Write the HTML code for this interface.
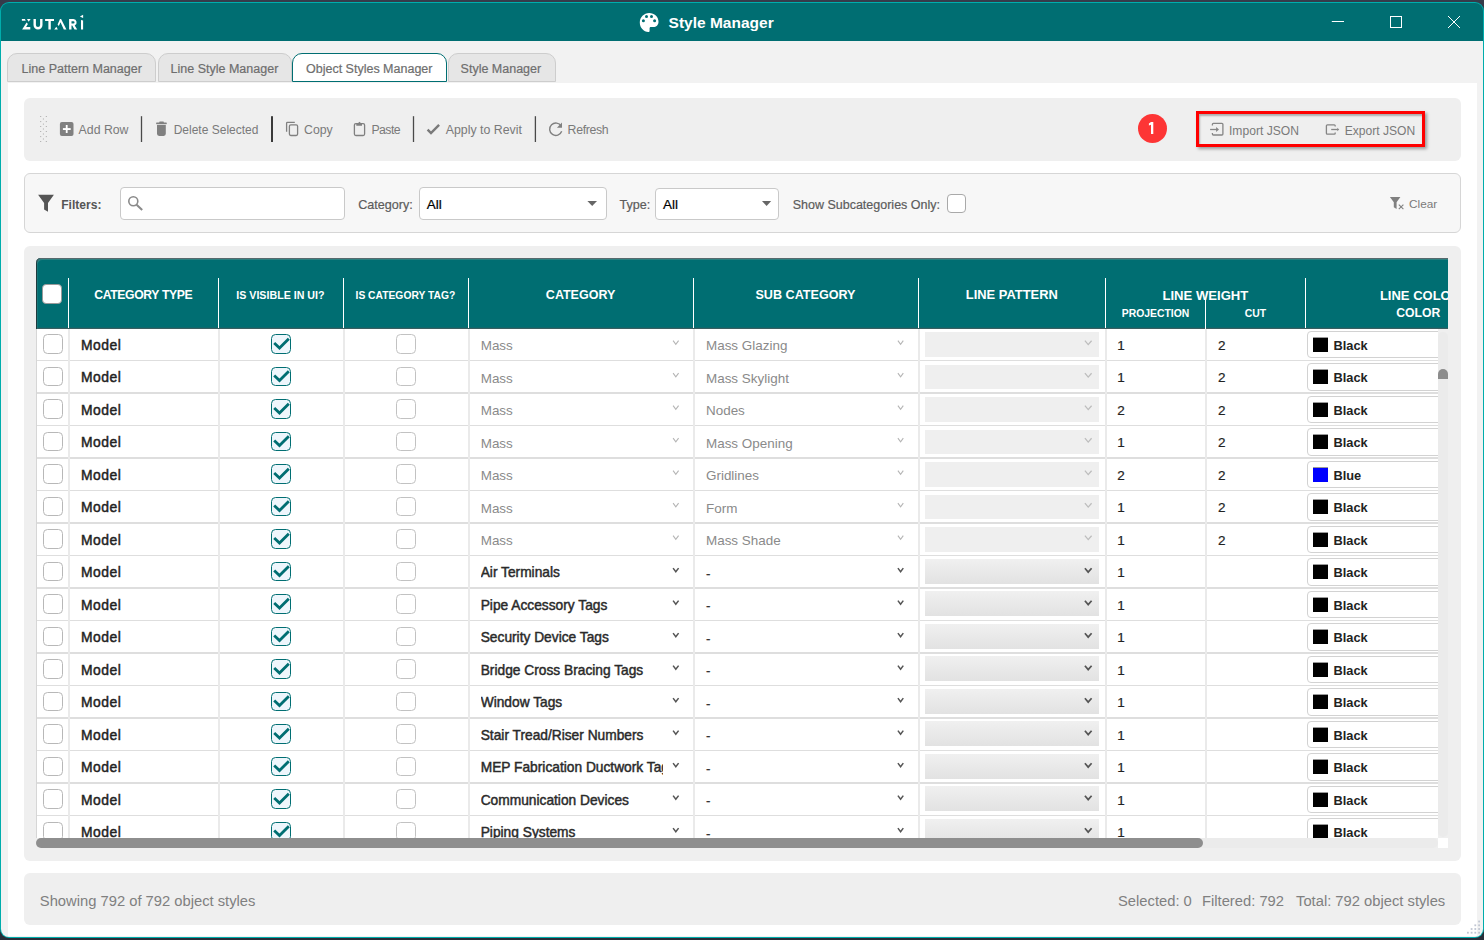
<!DOCTYPE html><html><head><meta charset="utf-8"><style>
html,body{margin:0;padding:0;}
body{width:1484px;height:940px;position:relative;overflow:hidden;background:#363b4a;font-family:"Liberation Sans",sans-serif;}
.t{position:absolute;line-height:1;white-space:nowrap;}
svg{position:absolute;overflow:visible;}
</style></head><body>
<div style="position:absolute;left:0.00px;top:900.00px;width:1484.00px;height:40.00px;background:#292d38;"></div>
<div style="position:absolute;left:0.00px;top:2.00px;width:1484.00px;height:936.30px;background:#00adac;border-radius:9px;"></div>
<div style="position:absolute;left:1.10px;top:40.60px;width:1481.60px;height:896.40px;background:#f2f2f2;border-radius:0 0 8px 8px;"></div>
<div style="position:absolute;left:1.10px;top:3.10px;width:1481.60px;height:37.50px;background:#006e72;border-radius:8px 8px 0 0;"></div>
<div style="position:absolute;left:7.50px;top:82.50px;width:1469.00px;height:853.50px;background:#fff;"></div>
<svg style="left:0px;top:0px" width="1484" height="41" viewBox="0 0 1484 41"><g fill="#fff"><polygon points="21.9,18.9 24.9,18.9 25.7,20.8 21.9,20.8"/><polygon points="27,18.9 30.7,18.9 28.6,21.8"/><polygon points="22.1,29.6 26.6,22.4 27.9,24.1 26.1,27.1 30.3,27.1 30.3,29.6"/><path d="M33.5,18.9 h2.4 v6 a2.1,2.1 0 0 0 4.2,0 v-6 h2.4 v6 a4.5,4.6 0 0 1 -9,0 z"/><polygon points="45.1,18.9 54,18.9 54,20.9 50.8,20.9 50.8,29.6 48.4,29.6 48.4,20.9 45.1,20.9"/><polygon points="54.2,29.6 57.8,29.6 56.4,26.7"/><polygon points="57.6,24.5 60,18.9 61.1,18.9 66.4,29.6 63.8,29.6 60.5,22.3 58.8,26"/><path d="M69.1,19.1 h4.3 a3.3,3.3 0 0 1 1.3,6.3 l2.5,4.2 h-2.7 l-2.3,-4 h-0.7 v4 h-2.4 z M71.5,21.3 v2.3 h1.9 a1.15,1.15 0 0 0 0,-2.3 z" fill-rule="evenodd"/><polygon points="81,20 83.1,20.6 83.1,29.6 81,29.6"/><polygon points="79.9,16.6 83.1,14.7 83.1,17.9"/></g><path fill="#fff" d="M649.2,12.9 C654.4,12.9 658.5,16.7 658.5,21.7 C658.5,24.9 656.3,27.1 653.3,27.1 L650.8,27.1 C650,27.1 649.6,27.7 649.6,28.5 L649.6,30.4 C649.6,31.5 649.2,32 648.4,32 C643.6,31.8 639.8,27.7 639.8,22.5 C639.8,17.2 644,12.9 649.2,12.9 Z"/><g fill="#006e72"><circle cx="646.5" cy="16.6" r="1.5"/><circle cx="651.5" cy="16.6" r="1.5"/><circle cx="643.4" cy="20.8" r="1.5"/><circle cx="654.6" cy="20.8" r="1.5"/></g><g stroke="#fff" stroke-width="1" fill="none"><line x1="1331.8" y1="21.5" x2="1344" y2="21.5"/><rect x="1390.5" y="16.5" width="11" height="11"/><line x1="1448" y1="16" x2="1460" y2="28"/><line x1="1460" y1="16" x2="1448" y2="28"/></g></svg>
<div class="t" style="left:668.60px;top:14.88px;font-size:15.5px;font-weight:700;color:#fff;">Style Manager</div>
<div style="position:absolute;left:7.10px;top:53.30px;width:149.40px;height:28.80px;background:#e6e6e6;border:1px solid #cdcdcd;border-radius:10px 10px 0 0;box-sizing:border-box;"></div>
<div class="t" style="left:21.60px;top:63.02px;font-size:12.5px;font-weight:400;color:#6e6e6e;-webkit-text-stroke:0.2px currentColor;">Line Pattern Manager</div>
<div style="position:absolute;left:157.50px;top:53.30px;width:134.00px;height:28.80px;background:#e6e6e6;border:1px solid #cdcdcd;border-radius:10px 10px 0 0;box-sizing:border-box;"></div>
<div class="t" style="left:170.60px;top:63.02px;font-size:12.5px;font-weight:400;color:#6e6e6e;-webkit-text-stroke:0.2px currentColor;">Line Style Manager</div>
<div style="position:absolute;left:292.00px;top:53.30px;width:155.00px;height:28.60px;background:#fff;border:1.5px solid #006e72;border-radius:10px 10px 0 0;box-sizing:border-box;"></div>
<div class="t" style="left:306.00px;top:63.02px;font-size:12.5px;font-weight:400;color:#6e6e6e;-webkit-text-stroke:0.2px currentColor;">Object Styles Manager</div>
<div style="position:absolute;left:447.50px;top:53.30px;width:108.50px;height:28.80px;background:#e6e6e6;border:1px solid #cdcdcd;border-radius:10px 10px 0 0;box-sizing:border-box;"></div>
<div class="t" style="left:460.60px;top:63.02px;font-size:12.5px;font-weight:400;color:#6e6e6e;-webkit-text-stroke:0.2px currentColor;">Style Manager</div>
<div style="position:absolute;left:24.00px;top:98.00px;width:1437.00px;height:62.50px;background:#efefef;border-radius:6px;"></div>
<svg style="left:0px;top:90px" width="700" height="70" viewBox="0 90 700 70"><g fill="#a8a8a8"><rect x="40.2" y="116.0" width="1" height="1"/><rect x="45.8" y="116.0" width="1" height="1"/><rect x="40.2" y="121.1" width="1" height="1"/><rect x="45.8" y="121.1" width="1" height="1"/><rect x="40.2" y="126.0" width="1" height="1"/><rect x="45.8" y="126.0" width="1" height="1"/><rect x="40.2" y="131.0" width="1" height="1"/><rect x="45.8" y="131.0" width="1" height="1"/><rect x="40.2" y="136.1" width="1" height="1"/><rect x="45.8" y="136.1" width="1" height="1"/><rect x="40.2" y="141.0" width="1" height="1"/><rect x="45.8" y="141.0" width="1" height="1"/><rect x="42.9" y="118.5" width="1" height="1"/><rect x="42.9" y="123.6" width="1" height="1"/><rect x="42.9" y="128.5" width="1" height="1"/><rect x="42.9" y="133.5" width="1" height="1"/><rect x="42.9" y="138.5" width="1" height="1"/></g><rect x="59.9" y="122" width="13.6" height="13.9" rx="2" fill="#808080"/><rect x="62.9" y="128.1" width="7.8" height="1.9" fill="#fff"/><rect x="65.8" y="125" width="1.8" height="8" fill="#fff"/><rect x="140.85" y="116.2" width="1.3" height="25.8" fill="#4a4a4a"/><rect x="271.0" y="116.2" width="2" height="25.8" fill="#3a3a3a"/><rect x="412.85" y="116.2" width="1.3" height="25.8" fill="#4a4a4a"/><rect x="534.75" y="116.2" width="1.3" height="25.8" fill="#4a4a4a"/><g fill="#808080"><rect x="156.1" y="122.4" width="10.7" height="1.8" rx="0.6"/><rect x="159.2" y="121.6" width="4.7" height="1.5" rx="0.7"/><path d="M157,125 h8.8 v8.8 a2.1,2.1 0 0 1 -2.1,2.1 h-4.6 a2.1,2.1 0 0 1 -2.1,-2.1 z"/></g><g fill="none" stroke="#808080" stroke-width="1.3"><path d="M286.6,131.7 V123.2 a0.8,0.8 0 0 1 0.8,-0.8 H294.8"/><rect x="289.4" y="124.9" width="8.2" height="10.6" rx="1.4"/></g><g fill="none" stroke="#808080" stroke-width="1.3"><rect x="354.4" y="123.6" width="10.2" height="11.9" rx="1.5"/></g><path d="M356.3,123 h1.8 l1.4,-1.3 l1.4,1.3 h1.1 v2.8 h-5.7 z" fill="#808080"/><polyline points="427.6,129.6 431,133.1 439.1,124.8" fill="none" stroke="#7a7a7a" stroke-width="2.4"/><path d="M561.2,126.1 A6.2,6.2 0 1 0 561.7,131.3" fill="none" stroke="#808080" stroke-width="1.4"/><polygon points="556.9,127.7 562,127.7 562,122.5" fill="#808080"/></svg>
<div class="t" style="left:78.60px;top:123.59px;font-size:12.3px;font-weight:400;color:#7a7a7a;">Add Row</div>
<div class="t" style="left:173.70px;top:123.84px;font-size:12.0px;font-weight:400;color:#7a7a7a;">Delete Selected</div>
<div class="t" style="left:304.00px;top:123.59px;font-size:12.3px;font-weight:400;color:#7a7a7a;">Copy</div>
<div class="t" style="left:371.40px;top:123.59px;font-size:12.3px;font-weight:400;color:#7a7a7a;letter-spacing:-0.55px;">Paste</div>
<div class="t" style="left:445.70px;top:123.55px;font-size:12.35px;font-weight:400;color:#7a7a7a;">Apply to Revit</div>
<div class="t" style="left:567.60px;top:123.59px;font-size:12.3px;font-weight:400;color:#7a7a7a;letter-spacing:-0.33px;">Refresh</div>
<div style="position:absolute;left:1138.00px;top:113.80px;width:29.30px;height:29.30px;background:#fd3535;border-radius:50%;"></div>
<svg style="left:1140px;top:115px" width="25" height="25" viewBox="1140 115 25 25"><polygon points="1151,122 1153.3,122 1153.3,134 1151,134 1151,124.7 1148.9,125.5 1148.9,123.6" fill="#fff"/></svg>
<div style="position:absolute;left:1195.80px;top:110.90px;width:229.20px;height:36.10px;border:3px solid #ff0000;box-sizing:border-box;box-shadow:2px 2px 3px rgba(0,0,0,0.35), inset 1px 2px 2px rgba(0,0,0,0.28);"></div>
<svg style="left:1200px;top:115px" width="150" height="30" viewBox="1200 115 150 30"><g fill="none" stroke="#858585" stroke-width="1.3"><path d="M1212.4,125.6 V124.3 a1,1 0 0 1 1,-1 H1221.9 a1,1 0 0 1 1,1 V134 a1,1 0 0 1 -1,1 H1213.4 a1,1 0 0 1 -1,-1 V132.9"/><line x1="1210.1" y1="129.5" x2="1217" y2="129.5"/><path d="M1335.2,126.6 V125.8 a1,1 0 0 0 -1,-1 H1327.4 a1,1 0 0 0 -1,1 V133.2 a1,1 0 0 0 1,1 H1334.2 a1,1 0 0 0 1,-1 V132.5"/><line x1="1331.2" y1="129.5" x2="1337.8" y2="129.5"/></g><g fill="#858585"><polygon points="1216.1,126.9 1216.1,132.1 1219,129.5"/><polygon points="1337.3,127.7 1337.3,131.3 1339.2,129.5"/></g></svg>
<div class="t" style="left:1229.00px;top:124.56px;font-size:12.1px;font-weight:400;color:#7a7a7a;">Import JSON</div>
<div class="t" style="left:1344.70px;top:124.56px;font-size:12.1px;font-weight:400;color:#7a7a7a;">Export JSON</div>
<div style="position:absolute;left:24.00px;top:173.00px;width:1436.60px;height:59.50px;background:#f7f7f7;border:1px solid #d6d6d6;border-radius:6px;box-sizing:border-box;"></div>
<div style="position:absolute;left:120.00px;top:187.20px;width:225.00px;height:33.00px;background:#fff;border:1px solid #c9c9c9;border-radius:4px;box-sizing:border-box;"></div>
<div style="position:absolute;left:419.00px;top:187.30px;width:187.50px;height:33.00px;background:#fff;border:1px solid #c9c9c9;border-radius:4px;box-sizing:border-box;"></div>
<div style="position:absolute;left:655.40px;top:187.50px;width:124.10px;height:32.80px;background:#fff;border:1px solid #c9c9c9;border-radius:4px;box-sizing:border-box;"></div>
<div style="position:absolute;left:946.60px;top:193.70px;width:19.20px;height:19.20px;background:#fff;border:1px solid #a9a9a9;border-radius:4px;box-sizing:border-box;"></div>
<svg style="left:0px;top:180px" width="1484" height="45" viewBox="0 180 1484 45"><polygon points="38.1,194.8 53.9,194.8 48,203 48,211.8 44.1,209.4 44.1,203" fill="#555"/><circle cx="133.3" cy="201.3" r="4.5" fill="none" stroke="#8a8a8a" stroke-width="1.6"/><line x1="136.6" y1="204.7" x2="142.2" y2="210" stroke="#8a8a8a" stroke-width="2"/><polygon points="587.4,201 597,201 592.2,206" fill="#666"/><polygon points="762,201 771.2,201 766.6,206" fill="#666"/><polygon points="1389.9,196.9 1400.4,196.9 1396.6,202.3 1396.6,209 1393.8,207.3 1393.8,202.3" fill="#808080"/><g stroke="#808080" stroke-width="1.1"><line x1="1398.8" y1="204.6" x2="1403.4" y2="209.1"/><line x1="1403.4" y1="204.6" x2="1398.8" y2="209.1"/></g></svg>
<div class="t" style="left:61.20px;top:199.36px;font-size:12.1px;font-weight:700;color:#555;">Filters:</div>
<div class="t" style="left:358.20px;top:199.23px;font-size:12.6px;font-weight:400;color:#5c5c5c;-webkit-text-stroke:0.2px currentColor;">Category:</div>
<div class="t" style="left:426.80px;top:198.07px;font-size:13.5px;font-weight:400;color:#000;-webkit-text-stroke:0.2px currentColor;">All</div>
<div class="t" style="left:619.50px;top:199.23px;font-size:12.6px;font-weight:400;color:#5c5c5c;-webkit-text-stroke:0.2px currentColor;">Type:</div>
<div class="t" style="left:662.90px;top:198.07px;font-size:13.5px;font-weight:400;color:#000;-webkit-text-stroke:0.2px currentColor;">All</div>
<div class="t" style="left:792.70px;top:199.32px;font-size:12.5px;font-weight:400;color:#5c5c5c;-webkit-text-stroke:0.2px currentColor;">Show Subcategories Only:</div>
<div class="t" style="left:1409.00px;top:199.01px;font-size:11.8px;font-weight:400;color:#7a7a7a;">Clear</div>
<div style="position:absolute;left:24.00px;top:873.00px;width:1436.70px;height:52.00px;background:#efefef;border-radius:6px;"></div>
<div class="t" style="left:39.80px;top:893.81px;font-size:14.75px;font-weight:400;color:#808080;">Showing 792 of 792 object styles</div>
<div class="t" style="left:1118.00px;top:893.81px;font-size:14.75px;font-weight:400;color:#808080;">Selected: 0</div>
<div class="t" style="left:1202.00px;top:893.81px;font-size:14.75px;font-weight:400;color:#808080;">Filtered: 792</div>
<div class="t" style="left:1296.00px;top:893.81px;font-size:14.75px;font-weight:400;color:#808080;">Total: 792 object styles</div>
<div style="position:absolute;left:24.00px;top:246.40px;width:1436.60px;height:614.60px;background:#efefef;border-radius:6px;"></div>
<div style="position:absolute;left:36.30px;top:329.40px;width:1401.80px;height:508.60px;background:#fff;"></div>
<div style="position:absolute;left:36.30px;top:329.40px;width:0.90px;height:508.60px;background:#d6d6d6;"></div>
<div style="position:absolute;left:36.00px;top:258.30px;width:1412.00px;height:71.10px;background:#006e72;border-radius:5px 0 0 0;box-shadow:inset 0 1px 0 #56696d, inset 1px 0 0 #1e3a3e, inset 1.5px 2px 0 #2b8080, inset 0 -1.2px 0 #3a5e61;"></div>
<div style="position:absolute;left:67.90px;top:277.90px;width:1.00px;height:50.60px;background:#fff;"></div>
<div style="position:absolute;left:217.80px;top:277.90px;width:1.00px;height:50.60px;background:#fff;"></div>
<div style="position:absolute;left:342.90px;top:277.90px;width:1.00px;height:50.60px;background:#fff;"></div>
<div style="position:absolute;left:467.80px;top:277.90px;width:1.00px;height:50.60px;background:#fff;"></div>
<div style="position:absolute;left:692.70px;top:277.90px;width:1.00px;height:50.60px;background:#fff;"></div>
<div style="position:absolute;left:917.80px;top:277.90px;width:1.00px;height:50.60px;background:#fff;"></div>
<div style="position:absolute;left:1104.70px;top:277.90px;width:1.00px;height:50.60px;background:#fff;"></div>
<div style="position:absolute;left:1304.90px;top:277.90px;width:1.00px;height:50.60px;background:#fff;"></div>
<div style="position:absolute;left:1205.00px;top:299.50px;width:1.00px;height:29.00px;background:#fff;"></div>
<div style="position:absolute;left:42.00px;top:284.00px;width:19.70px;height:19.80px;background:#fff;border:1px solid #9a9a9a;border-radius:4px;box-sizing:border-box;"></div>
<div class="t" style="left:-6.70px;width:300px;text-align:center;top:288.87px;font-size:12.2px;font-weight:700;color:#fff;letter-spacing:-0.35px">CATEGORY TYPE</div>
<div class="t" style="left:130.40px;width:300px;text-align:center;top:290.18px;font-size:10.66px;font-weight:700;color:#fff;letter-spacing:0px">IS VISIBLE IN UI?</div>
<div class="t" style="left:255.40px;width:300px;text-align:center;top:291.28px;font-size:10.3px;font-weight:700;color:#fff;letter-spacing:0px">IS CATEGORY TAG?</div>
<div class="t" style="left:430.60px;width:300px;text-align:center;top:289.12px;font-size:12.5px;font-weight:700;color:#fff;letter-spacing:0px">CATEGORY</div>
<div class="t" style="left:655.50px;width:300px;text-align:center;top:289.03px;font-size:12.6px;font-weight:700;color:#fff;letter-spacing:0px">SUB CATEGORY</div>
<div class="t" style="left:861.80px;width:300px;text-align:center;top:288.78px;font-size:12.9px;font-weight:700;color:#fff;letter-spacing:0px">LINE PATTERN</div>
<div class="t" style="left:1055.40px;width:300px;text-align:center;top:288.91px;font-size:13.1px;font-weight:700;color:#fff;letter-spacing:0px">LINE WEIGHT</div>
<div class="t" style="left:1005.50px;width:300px;text-align:center;top:309.30px;font-size:10.4px;font-weight:700;color:#fff;letter-spacing:0px">PROJECTION</div>
<div class="t" style="left:1105.40px;width:300px;text-align:center;top:309.30px;font-size:10.4px;font-weight:700;color:#fff;letter-spacing:0px">CUT</div>
<div style="position:absolute;left:1306px;top:258.3px;width:142px;height:71px;overflow:hidden">
<div class="t" style="left:-36px;width:300px;text-align:center;top:30.50px;font-size:13px;font-weight:700;color:#fff">LINE COLOR</div>
<div class="t" style="left:-37.700000000000045px;width:300px;text-align:center;top:49.17px;font-size:12.2px;font-weight:700;color:#fff">COLOR</div>
</div>
<div style="position:absolute;left:37.2px;top:329.4px;width:1400.8px;height:508.6px;overflow:hidden">
<div style="position:absolute;left:0.00px;top:30.35px;width:1401.00px;height:1.50px;background:#dedede;"></div>
<div style="position:absolute;left:0.00px;top:62.85px;width:1401.00px;height:1.50px;background:#dedede;"></div>
<div style="position:absolute;left:0.00px;top:95.35px;width:1401.00px;height:1.50px;background:#dedede;"></div>
<div style="position:absolute;left:0.00px;top:127.85px;width:1401.00px;height:1.50px;background:#dedede;"></div>
<div style="position:absolute;left:0.00px;top:160.35px;width:1401.00px;height:1.50px;background:#dedede;"></div>
<div style="position:absolute;left:0.00px;top:192.85px;width:1401.00px;height:1.50px;background:#dedede;"></div>
<div style="position:absolute;left:0.00px;top:225.35px;width:1401.00px;height:1.50px;background:#dedede;"></div>
<div style="position:absolute;left:0.00px;top:257.85px;width:1401.00px;height:1.50px;background:#dedede;"></div>
<div style="position:absolute;left:0.00px;top:290.35px;width:1401.00px;height:1.50px;background:#dedede;"></div>
<div style="position:absolute;left:0.00px;top:322.85px;width:1401.00px;height:1.50px;background:#dedede;"></div>
<div style="position:absolute;left:0.00px;top:355.35px;width:1401.00px;height:1.50px;background:#dedede;"></div>
<div style="position:absolute;left:0.00px;top:387.85px;width:1401.00px;height:1.50px;background:#dedede;"></div>
<div style="position:absolute;left:0.00px;top:420.35px;width:1401.00px;height:1.50px;background:#dedede;"></div>
<div style="position:absolute;left:0.00px;top:452.85px;width:1401.00px;height:1.50px;background:#dedede;"></div>
<div style="position:absolute;left:0.00px;top:485.35px;width:1401.00px;height:1.50px;background:#dedede;"></div>
<div style="position:absolute;left:31.05px;top:0.00px;width:1.50px;height:509.00px;background:#eaeaea;"></div>
<div style="position:absolute;left:180.95px;top:0.00px;width:1.50px;height:509.00px;background:#eaeaea;"></div>
<div style="position:absolute;left:306.05px;top:0.00px;width:1.50px;height:509.00px;background:#eaeaea;"></div>
<div style="position:absolute;left:430.95px;top:0.00px;width:1.50px;height:509.00px;background:#eaeaea;"></div>
<div style="position:absolute;left:655.85px;top:0.00px;width:1.50px;height:509.00px;background:#eaeaea;"></div>
<div style="position:absolute;left:880.95px;top:0.00px;width:1.50px;height:509.00px;background:#eaeaea;"></div>
<div style="position:absolute;left:1067.85px;top:0.00px;width:1.50px;height:509.00px;background:#eaeaea;"></div>
<div style="position:absolute;left:1168.15px;top:0.00px;width:1.50px;height:509.00px;background:#eaeaea;"></div>
<div style="position:absolute;left:6.10px;top:5.10px;width:19.50px;height:19.50px;background:#fff;border:1px solid #b8b8b8;border-radius:4.5px;box-sizing:border-box;"></div>
<div class="t" style="left:43.80px;top:9.23px;font-size:13.9px;font-weight:400;color:#222;-webkit-text-stroke:0.45px currentColor;letter-spacing:0.5px;">Model</div>
<div style="position:absolute;left:233.90px;top:4.80px;width:19.80px;height:19.80px;background:#eef6fc;border:1.5px solid #006e72;border-radius:4.5px;box-sizing:border-box;"></div>
<div style="position:absolute;left:359.10px;top:5.00px;width:19.30px;height:19.30px;background:#fff;border:1px solid #c2c2c2;border-radius:4.5px;box-sizing:border-box;"></div>
<div class="t" style="left:443.50px;top:9.61px;font-size:13.45px;font-weight:400;color:#8a8a8a;">Mass</div>
<div class="t" style="left:668.80px;top:9.61px;font-size:13.45px;font-weight:400;color:#8a8a8a;">Mass Glazing</div>
<div style="position:absolute;left:887.80px;top:2.80px;width:174.00px;height:24.70px;background:#efefef;"></div>
<div class="t" style="left:1080.00px;top:9.37px;font-size:13.5px;font-weight:400;color:#222;-webkit-text-stroke:0.2px currentColor;">1</div>
<div class="t" style="left:1180.80px;top:9.37px;font-size:13.5px;font-weight:400;color:#222;-webkit-text-stroke:0.2px currentColor;">2</div>
<div style="position:absolute;left:1270.00px;top:1.20px;width:140.00px;height:27.90px;background:#fff;border:1px solid #d2d2d2;border-radius:4px;box-sizing:border-box;"></div>
<div style="position:absolute;left:1276.00px;top:7.30px;width:14.80px;height:15.20px;background:#000;box-shadow:inset 0 1px 0 #9a9a9a;"></div>
<div class="t" style="left:1296.30px;top:10.16px;font-size:12.8px;font-weight:700;color:#222;">Black</div>
<div style="position:absolute;left:6.10px;top:37.60px;width:19.50px;height:19.50px;background:#fff;border:1px solid #b8b8b8;border-radius:4.5px;box-sizing:border-box;"></div>
<div class="t" style="left:43.80px;top:41.73px;font-size:13.9px;font-weight:400;color:#222;-webkit-text-stroke:0.45px currentColor;letter-spacing:0.5px;">Model</div>
<div style="position:absolute;left:233.90px;top:37.30px;width:19.80px;height:19.80px;background:#eef6fc;border:1.5px solid #006e72;border-radius:4.5px;box-sizing:border-box;"></div>
<div style="position:absolute;left:359.10px;top:37.50px;width:19.30px;height:19.30px;background:#fff;border:1px solid #c2c2c2;border-radius:4.5px;box-sizing:border-box;"></div>
<div class="t" style="left:443.50px;top:42.11px;font-size:13.45px;font-weight:400;color:#8a8a8a;">Mass</div>
<div class="t" style="left:668.80px;top:42.11px;font-size:13.45px;font-weight:400;color:#8a8a8a;">Mass Skylight</div>
<div style="position:absolute;left:887.80px;top:35.30px;width:174.00px;height:24.70px;background:#efefef;"></div>
<div class="t" style="left:1080.00px;top:41.87px;font-size:13.5px;font-weight:400;color:#222;-webkit-text-stroke:0.2px currentColor;">1</div>
<div class="t" style="left:1180.80px;top:41.87px;font-size:13.5px;font-weight:400;color:#222;-webkit-text-stroke:0.2px currentColor;">2</div>
<div style="position:absolute;left:1270.00px;top:33.70px;width:140.00px;height:27.90px;background:#fff;border:1px solid #d2d2d2;border-radius:4px;box-sizing:border-box;"></div>
<div style="position:absolute;left:1276.00px;top:39.80px;width:14.80px;height:15.20px;background:#000;box-shadow:inset 0 1px 0 #9a9a9a;"></div>
<div class="t" style="left:1296.30px;top:42.66px;font-size:12.8px;font-weight:700;color:#222;">Black</div>
<div style="position:absolute;left:6.10px;top:70.10px;width:19.50px;height:19.50px;background:#fff;border:1px solid #b8b8b8;border-radius:4.5px;box-sizing:border-box;"></div>
<div class="t" style="left:43.80px;top:74.23px;font-size:13.9px;font-weight:400;color:#222;-webkit-text-stroke:0.45px currentColor;letter-spacing:0.5px;">Model</div>
<div style="position:absolute;left:233.90px;top:69.80px;width:19.80px;height:19.80px;background:#eef6fc;border:1.5px solid #006e72;border-radius:4.5px;box-sizing:border-box;"></div>
<div style="position:absolute;left:359.10px;top:70.00px;width:19.30px;height:19.30px;background:#fff;border:1px solid #c2c2c2;border-radius:4.5px;box-sizing:border-box;"></div>
<div class="t" style="left:443.50px;top:74.61px;font-size:13.45px;font-weight:400;color:#8a8a8a;">Mass</div>
<div class="t" style="left:668.80px;top:74.61px;font-size:13.45px;font-weight:400;color:#8a8a8a;">Nodes</div>
<div style="position:absolute;left:887.80px;top:67.80px;width:174.00px;height:24.70px;background:#efefef;"></div>
<div class="t" style="left:1080.00px;top:74.37px;font-size:13.5px;font-weight:400;color:#222;-webkit-text-stroke:0.2px currentColor;">2</div>
<div class="t" style="left:1180.80px;top:74.37px;font-size:13.5px;font-weight:400;color:#222;-webkit-text-stroke:0.2px currentColor;">2</div>
<div style="position:absolute;left:1270.00px;top:66.20px;width:140.00px;height:27.90px;background:#fff;border:1px solid #d2d2d2;border-radius:4px;box-sizing:border-box;"></div>
<div style="position:absolute;left:1276.00px;top:72.30px;width:14.80px;height:15.20px;background:#000;box-shadow:inset 0 1px 0 #9a9a9a;"></div>
<div class="t" style="left:1296.30px;top:75.16px;font-size:12.8px;font-weight:700;color:#222;">Black</div>
<div style="position:absolute;left:6.10px;top:102.60px;width:19.50px;height:19.50px;background:#fff;border:1px solid #b8b8b8;border-radius:4.5px;box-sizing:border-box;"></div>
<div class="t" style="left:43.80px;top:106.73px;font-size:13.9px;font-weight:400;color:#222;-webkit-text-stroke:0.45px currentColor;letter-spacing:0.5px;">Model</div>
<div style="position:absolute;left:233.90px;top:102.30px;width:19.80px;height:19.80px;background:#eef6fc;border:1.5px solid #006e72;border-radius:4.5px;box-sizing:border-box;"></div>
<div style="position:absolute;left:359.10px;top:102.50px;width:19.30px;height:19.30px;background:#fff;border:1px solid #c2c2c2;border-radius:4.5px;box-sizing:border-box;"></div>
<div class="t" style="left:443.50px;top:107.11px;font-size:13.45px;font-weight:400;color:#8a8a8a;">Mass</div>
<div class="t" style="left:668.80px;top:107.11px;font-size:13.45px;font-weight:400;color:#8a8a8a;">Mass Opening</div>
<div style="position:absolute;left:887.80px;top:100.30px;width:174.00px;height:24.70px;background:#efefef;"></div>
<div class="t" style="left:1080.00px;top:106.87px;font-size:13.5px;font-weight:400;color:#222;-webkit-text-stroke:0.2px currentColor;">1</div>
<div class="t" style="left:1180.80px;top:106.87px;font-size:13.5px;font-weight:400;color:#222;-webkit-text-stroke:0.2px currentColor;">2</div>
<div style="position:absolute;left:1270.00px;top:98.70px;width:140.00px;height:27.90px;background:#fff;border:1px solid #d2d2d2;border-radius:4px;box-sizing:border-box;"></div>
<div style="position:absolute;left:1276.00px;top:104.80px;width:14.80px;height:15.20px;background:#000;box-shadow:inset 0 1px 0 #9a9a9a;"></div>
<div class="t" style="left:1296.30px;top:107.66px;font-size:12.8px;font-weight:700;color:#222;">Black</div>
<div style="position:absolute;left:6.10px;top:135.10px;width:19.50px;height:19.50px;background:#fff;border:1px solid #b8b8b8;border-radius:4.5px;box-sizing:border-box;"></div>
<div class="t" style="left:43.80px;top:139.23px;font-size:13.9px;font-weight:400;color:#222;-webkit-text-stroke:0.45px currentColor;letter-spacing:0.5px;">Model</div>
<div style="position:absolute;left:233.90px;top:134.80px;width:19.80px;height:19.80px;background:#eef6fc;border:1.5px solid #006e72;border-radius:4.5px;box-sizing:border-box;"></div>
<div style="position:absolute;left:359.10px;top:135.00px;width:19.30px;height:19.30px;background:#fff;border:1px solid #c2c2c2;border-radius:4.5px;box-sizing:border-box;"></div>
<div class="t" style="left:443.50px;top:139.61px;font-size:13.45px;font-weight:400;color:#8a8a8a;">Mass</div>
<div class="t" style="left:668.80px;top:139.61px;font-size:13.45px;font-weight:400;color:#8a8a8a;">Gridlines</div>
<div style="position:absolute;left:887.80px;top:132.80px;width:174.00px;height:24.70px;background:#efefef;"></div>
<div class="t" style="left:1080.00px;top:139.37px;font-size:13.5px;font-weight:400;color:#222;-webkit-text-stroke:0.2px currentColor;">2</div>
<div class="t" style="left:1180.80px;top:139.37px;font-size:13.5px;font-weight:400;color:#222;-webkit-text-stroke:0.2px currentColor;">2</div>
<div style="position:absolute;left:1270.00px;top:131.20px;width:140.00px;height:27.90px;background:#fff;border:1px solid #d2d2d2;border-radius:4px;box-sizing:border-box;"></div>
<div style="position:absolute;left:1276.00px;top:137.30px;width:14.80px;height:15.20px;background:#0000ff;box-shadow:inset 0 1px 0 #9a9a9a;"></div>
<div class="t" style="left:1296.30px;top:140.16px;font-size:12.8px;font-weight:700;color:#222;">Blue</div>
<div style="position:absolute;left:6.10px;top:167.60px;width:19.50px;height:19.50px;background:#fff;border:1px solid #b8b8b8;border-radius:4.5px;box-sizing:border-box;"></div>
<div class="t" style="left:43.80px;top:171.73px;font-size:13.9px;font-weight:400;color:#222;-webkit-text-stroke:0.45px currentColor;letter-spacing:0.5px;">Model</div>
<div style="position:absolute;left:233.90px;top:167.30px;width:19.80px;height:19.80px;background:#eef6fc;border:1.5px solid #006e72;border-radius:4.5px;box-sizing:border-box;"></div>
<div style="position:absolute;left:359.10px;top:167.50px;width:19.30px;height:19.30px;background:#fff;border:1px solid #c2c2c2;border-radius:4.5px;box-sizing:border-box;"></div>
<div class="t" style="left:443.50px;top:172.11px;font-size:13.45px;font-weight:400;color:#8a8a8a;">Mass</div>
<div class="t" style="left:668.80px;top:172.11px;font-size:13.45px;font-weight:400;color:#8a8a8a;">Form</div>
<div style="position:absolute;left:887.80px;top:165.30px;width:174.00px;height:24.70px;background:#efefef;"></div>
<div class="t" style="left:1080.00px;top:171.87px;font-size:13.5px;font-weight:400;color:#222;-webkit-text-stroke:0.2px currentColor;">1</div>
<div class="t" style="left:1180.80px;top:171.87px;font-size:13.5px;font-weight:400;color:#222;-webkit-text-stroke:0.2px currentColor;">2</div>
<div style="position:absolute;left:1270.00px;top:163.70px;width:140.00px;height:27.90px;background:#fff;border:1px solid #d2d2d2;border-radius:4px;box-sizing:border-box;"></div>
<div style="position:absolute;left:1276.00px;top:169.80px;width:14.80px;height:15.20px;background:#000;box-shadow:inset 0 1px 0 #9a9a9a;"></div>
<div class="t" style="left:1296.30px;top:172.66px;font-size:12.8px;font-weight:700;color:#222;">Black</div>
<div style="position:absolute;left:6.10px;top:200.10px;width:19.50px;height:19.50px;background:#fff;border:1px solid #b8b8b8;border-radius:4.5px;box-sizing:border-box;"></div>
<div class="t" style="left:43.80px;top:204.23px;font-size:13.9px;font-weight:400;color:#222;-webkit-text-stroke:0.45px currentColor;letter-spacing:0.5px;">Model</div>
<div style="position:absolute;left:233.90px;top:199.80px;width:19.80px;height:19.80px;background:#eef6fc;border:1.5px solid #006e72;border-radius:4.5px;box-sizing:border-box;"></div>
<div style="position:absolute;left:359.10px;top:200.00px;width:19.30px;height:19.30px;background:#fff;border:1px solid #c2c2c2;border-radius:4.5px;box-sizing:border-box;"></div>
<div class="t" style="left:443.50px;top:204.61px;font-size:13.45px;font-weight:400;color:#8a8a8a;">Mass</div>
<div class="t" style="left:668.80px;top:204.61px;font-size:13.45px;font-weight:400;color:#8a8a8a;">Mass Shade</div>
<div style="position:absolute;left:887.80px;top:197.80px;width:174.00px;height:24.70px;background:#efefef;"></div>
<div class="t" style="left:1080.00px;top:204.37px;font-size:13.5px;font-weight:400;color:#222;-webkit-text-stroke:0.2px currentColor;">1</div>
<div class="t" style="left:1180.80px;top:204.37px;font-size:13.5px;font-weight:400;color:#222;-webkit-text-stroke:0.2px currentColor;">2</div>
<div style="position:absolute;left:1270.00px;top:196.20px;width:140.00px;height:27.90px;background:#fff;border:1px solid #d2d2d2;border-radius:4px;box-sizing:border-box;"></div>
<div style="position:absolute;left:1276.00px;top:202.30px;width:14.80px;height:15.20px;background:#000;box-shadow:inset 0 1px 0 #9a9a9a;"></div>
<div class="t" style="left:1296.30px;top:205.16px;font-size:12.8px;font-weight:700;color:#222;">Black</div>
<div style="position:absolute;left:6.10px;top:232.60px;width:19.50px;height:19.50px;background:#fff;border:1px solid #b8b8b8;border-radius:4.5px;box-sizing:border-box;"></div>
<div class="t" style="left:43.80px;top:236.73px;font-size:13.9px;font-weight:400;color:#222;-webkit-text-stroke:0.45px currentColor;letter-spacing:0.5px;">Model</div>
<div style="position:absolute;left:233.90px;top:232.30px;width:19.80px;height:19.80px;background:#eef6fc;border:1.5px solid #006e72;border-radius:4.5px;box-sizing:border-box;"></div>
<div style="position:absolute;left:359.10px;top:232.50px;width:19.30px;height:19.30px;background:#fff;border:1px solid #c2c2c2;border-radius:4.5px;box-sizing:border-box;"></div>
<div class="t" style="left:443.50px;top:236.86px;font-size:13.75px;font-weight:400;color:#2a2a2a;-webkit-text-stroke:0.45px currentColor;width:182.5px;height:20px;overflow:hidden;">Air Terminals</div>
<div class="t" style="left:668.80px;top:237.11px;font-size:13.45px;font-weight:400;color:#333;-webkit-text-stroke:0.2px currentColor;">-</div>
<div style="position:absolute;left:887.80px;top:229.60px;width:174.00px;height:24.80px;background:linear-gradient(#f0f0f0,#e2e2e2);"></div>
<div class="t" style="left:1080.00px;top:236.87px;font-size:13.5px;font-weight:400;color:#222;-webkit-text-stroke:0.2px currentColor;">1</div>
<div style="position:absolute;left:1270.00px;top:228.70px;width:140.00px;height:27.90px;background:#fff;border:1px solid #d2d2d2;border-radius:4px;box-sizing:border-box;"></div>
<div style="position:absolute;left:1276.00px;top:234.80px;width:14.80px;height:15.20px;background:#000;box-shadow:inset 0 1px 0 #9a9a9a;"></div>
<div class="t" style="left:1296.30px;top:237.66px;font-size:12.8px;font-weight:700;color:#222;">Black</div>
<div style="position:absolute;left:6.10px;top:265.10px;width:19.50px;height:19.50px;background:#fff;border:1px solid #b8b8b8;border-radius:4.5px;box-sizing:border-box;"></div>
<div class="t" style="left:43.80px;top:269.23px;font-size:13.9px;font-weight:400;color:#222;-webkit-text-stroke:0.45px currentColor;letter-spacing:0.5px;">Model</div>
<div style="position:absolute;left:233.90px;top:264.80px;width:19.80px;height:19.80px;background:#eef6fc;border:1.5px solid #006e72;border-radius:4.5px;box-sizing:border-box;"></div>
<div style="position:absolute;left:359.10px;top:265.00px;width:19.30px;height:19.30px;background:#fff;border:1px solid #c2c2c2;border-radius:4.5px;box-sizing:border-box;"></div>
<div class="t" style="left:443.50px;top:269.36px;font-size:13.75px;font-weight:400;color:#2a2a2a;-webkit-text-stroke:0.45px currentColor;width:182.5px;height:20px;overflow:hidden;">Pipe Accessory Tags</div>
<div class="t" style="left:668.80px;top:269.61px;font-size:13.45px;font-weight:400;color:#333;-webkit-text-stroke:0.2px currentColor;">-</div>
<div style="position:absolute;left:887.80px;top:262.10px;width:174.00px;height:24.80px;background:linear-gradient(#f0f0f0,#e2e2e2);"></div>
<div class="t" style="left:1080.00px;top:269.37px;font-size:13.5px;font-weight:400;color:#222;-webkit-text-stroke:0.2px currentColor;">1</div>
<div style="position:absolute;left:1270.00px;top:261.20px;width:140.00px;height:27.90px;background:#fff;border:1px solid #d2d2d2;border-radius:4px;box-sizing:border-box;"></div>
<div style="position:absolute;left:1276.00px;top:267.30px;width:14.80px;height:15.20px;background:#000;box-shadow:inset 0 1px 0 #9a9a9a;"></div>
<div class="t" style="left:1296.30px;top:270.16px;font-size:12.8px;font-weight:700;color:#222;">Black</div>
<div style="position:absolute;left:6.10px;top:297.60px;width:19.50px;height:19.50px;background:#fff;border:1px solid #b8b8b8;border-radius:4.5px;box-sizing:border-box;"></div>
<div class="t" style="left:43.80px;top:301.73px;font-size:13.9px;font-weight:400;color:#222;-webkit-text-stroke:0.45px currentColor;letter-spacing:0.5px;">Model</div>
<div style="position:absolute;left:233.90px;top:297.30px;width:19.80px;height:19.80px;background:#eef6fc;border:1.5px solid #006e72;border-radius:4.5px;box-sizing:border-box;"></div>
<div style="position:absolute;left:359.10px;top:297.50px;width:19.30px;height:19.30px;background:#fff;border:1px solid #c2c2c2;border-radius:4.5px;box-sizing:border-box;"></div>
<div class="t" style="left:443.50px;top:301.86px;font-size:13.75px;font-weight:400;color:#2a2a2a;-webkit-text-stroke:0.45px currentColor;width:182.5px;height:20px;overflow:hidden;">Security Device Tags</div>
<div class="t" style="left:668.80px;top:302.11px;font-size:13.45px;font-weight:400;color:#333;-webkit-text-stroke:0.2px currentColor;">-</div>
<div style="position:absolute;left:887.80px;top:294.60px;width:174.00px;height:24.80px;background:linear-gradient(#f0f0f0,#e2e2e2);"></div>
<div class="t" style="left:1080.00px;top:301.87px;font-size:13.5px;font-weight:400;color:#222;-webkit-text-stroke:0.2px currentColor;">1</div>
<div style="position:absolute;left:1270.00px;top:293.70px;width:140.00px;height:27.90px;background:#fff;border:1px solid #d2d2d2;border-radius:4px;box-sizing:border-box;"></div>
<div style="position:absolute;left:1276.00px;top:299.80px;width:14.80px;height:15.20px;background:#000;box-shadow:inset 0 1px 0 #9a9a9a;"></div>
<div class="t" style="left:1296.30px;top:302.66px;font-size:12.8px;font-weight:700;color:#222;">Black</div>
<div style="position:absolute;left:6.10px;top:330.10px;width:19.50px;height:19.50px;background:#fff;border:1px solid #b8b8b8;border-radius:4.5px;box-sizing:border-box;"></div>
<div class="t" style="left:43.80px;top:334.23px;font-size:13.9px;font-weight:400;color:#222;-webkit-text-stroke:0.45px currentColor;letter-spacing:0.5px;">Model</div>
<div style="position:absolute;left:233.90px;top:329.80px;width:19.80px;height:19.80px;background:#eef6fc;border:1.5px solid #006e72;border-radius:4.5px;box-sizing:border-box;"></div>
<div style="position:absolute;left:359.10px;top:330.00px;width:19.30px;height:19.30px;background:#fff;border:1px solid #c2c2c2;border-radius:4.5px;box-sizing:border-box;"></div>
<div class="t" style="left:443.50px;top:334.36px;font-size:13.75px;font-weight:400;color:#2a2a2a;-webkit-text-stroke:0.45px currentColor;width:182.5px;height:20px;overflow:hidden;">Bridge Cross Bracing Tags</div>
<div class="t" style="left:668.80px;top:334.61px;font-size:13.45px;font-weight:400;color:#333;-webkit-text-stroke:0.2px currentColor;">-</div>
<div style="position:absolute;left:887.80px;top:327.10px;width:174.00px;height:24.80px;background:linear-gradient(#f0f0f0,#e2e2e2);"></div>
<div class="t" style="left:1080.00px;top:334.37px;font-size:13.5px;font-weight:400;color:#222;-webkit-text-stroke:0.2px currentColor;">1</div>
<div style="position:absolute;left:1270.00px;top:326.20px;width:140.00px;height:27.90px;background:#fff;border:1px solid #d2d2d2;border-radius:4px;box-sizing:border-box;"></div>
<div style="position:absolute;left:1276.00px;top:332.30px;width:14.80px;height:15.20px;background:#000;box-shadow:inset 0 1px 0 #9a9a9a;"></div>
<div class="t" style="left:1296.30px;top:335.16px;font-size:12.8px;font-weight:700;color:#222;">Black</div>
<div style="position:absolute;left:6.10px;top:362.60px;width:19.50px;height:19.50px;background:#fff;border:1px solid #b8b8b8;border-radius:4.5px;box-sizing:border-box;"></div>
<div class="t" style="left:43.80px;top:366.73px;font-size:13.9px;font-weight:400;color:#222;-webkit-text-stroke:0.45px currentColor;letter-spacing:0.5px;">Model</div>
<div style="position:absolute;left:233.90px;top:362.30px;width:19.80px;height:19.80px;background:#eef6fc;border:1.5px solid #006e72;border-radius:4.5px;box-sizing:border-box;"></div>
<div style="position:absolute;left:359.10px;top:362.50px;width:19.30px;height:19.30px;background:#fff;border:1px solid #c2c2c2;border-radius:4.5px;box-sizing:border-box;"></div>
<div class="t" style="left:443.50px;top:366.86px;font-size:13.75px;font-weight:400;color:#2a2a2a;-webkit-text-stroke:0.45px currentColor;width:182.5px;height:20px;overflow:hidden;">Window Tags</div>
<div class="t" style="left:668.80px;top:367.11px;font-size:13.45px;font-weight:400;color:#333;-webkit-text-stroke:0.2px currentColor;">-</div>
<div style="position:absolute;left:887.80px;top:359.60px;width:174.00px;height:24.80px;background:linear-gradient(#f0f0f0,#e2e2e2);"></div>
<div class="t" style="left:1080.00px;top:366.87px;font-size:13.5px;font-weight:400;color:#222;-webkit-text-stroke:0.2px currentColor;">1</div>
<div style="position:absolute;left:1270.00px;top:358.70px;width:140.00px;height:27.90px;background:#fff;border:1px solid #d2d2d2;border-radius:4px;box-sizing:border-box;"></div>
<div style="position:absolute;left:1276.00px;top:364.80px;width:14.80px;height:15.20px;background:#000;box-shadow:inset 0 1px 0 #9a9a9a;"></div>
<div class="t" style="left:1296.30px;top:367.66px;font-size:12.8px;font-weight:700;color:#222;">Black</div>
<div style="position:absolute;left:6.10px;top:395.10px;width:19.50px;height:19.50px;background:#fff;border:1px solid #b8b8b8;border-radius:4.5px;box-sizing:border-box;"></div>
<div class="t" style="left:43.80px;top:399.23px;font-size:13.9px;font-weight:400;color:#222;-webkit-text-stroke:0.45px currentColor;letter-spacing:0.5px;">Model</div>
<div style="position:absolute;left:233.90px;top:394.80px;width:19.80px;height:19.80px;background:#eef6fc;border:1.5px solid #006e72;border-radius:4.5px;box-sizing:border-box;"></div>
<div style="position:absolute;left:359.10px;top:395.00px;width:19.30px;height:19.30px;background:#fff;border:1px solid #c2c2c2;border-radius:4.5px;box-sizing:border-box;"></div>
<div class="t" style="left:443.50px;top:399.36px;font-size:13.75px;font-weight:400;color:#2a2a2a;-webkit-text-stroke:0.45px currentColor;width:182.5px;height:20px;overflow:hidden;">Stair Tread/Riser Numbers</div>
<div class="t" style="left:668.80px;top:399.61px;font-size:13.45px;font-weight:400;color:#333;-webkit-text-stroke:0.2px currentColor;">-</div>
<div style="position:absolute;left:887.80px;top:392.10px;width:174.00px;height:24.80px;background:linear-gradient(#f0f0f0,#e2e2e2);"></div>
<div class="t" style="left:1080.00px;top:399.37px;font-size:13.5px;font-weight:400;color:#222;-webkit-text-stroke:0.2px currentColor;">1</div>
<div style="position:absolute;left:1270.00px;top:391.20px;width:140.00px;height:27.90px;background:#fff;border:1px solid #d2d2d2;border-radius:4px;box-sizing:border-box;"></div>
<div style="position:absolute;left:1276.00px;top:397.30px;width:14.80px;height:15.20px;background:#000;box-shadow:inset 0 1px 0 #9a9a9a;"></div>
<div class="t" style="left:1296.30px;top:400.16px;font-size:12.8px;font-weight:700;color:#222;">Black</div>
<div style="position:absolute;left:6.10px;top:427.60px;width:19.50px;height:19.50px;background:#fff;border:1px solid #b8b8b8;border-radius:4.5px;box-sizing:border-box;"></div>
<div class="t" style="left:43.80px;top:431.73px;font-size:13.9px;font-weight:400;color:#222;-webkit-text-stroke:0.45px currentColor;letter-spacing:0.5px;">Model</div>
<div style="position:absolute;left:233.90px;top:427.30px;width:19.80px;height:19.80px;background:#eef6fc;border:1.5px solid #006e72;border-radius:4.5px;box-sizing:border-box;"></div>
<div style="position:absolute;left:359.10px;top:427.50px;width:19.30px;height:19.30px;background:#fff;border:1px solid #c2c2c2;border-radius:4.5px;box-sizing:border-box;"></div>
<div class="t" style="left:443.50px;top:431.86px;font-size:13.75px;font-weight:400;color:#2a2a2a;-webkit-text-stroke:0.45px currentColor;width:182.5px;height:20px;overflow:hidden;">MEP Fabrication Ductwork Tags</div>
<div class="t" style="left:668.80px;top:432.11px;font-size:13.45px;font-weight:400;color:#333;-webkit-text-stroke:0.2px currentColor;">-</div>
<div style="position:absolute;left:887.80px;top:424.60px;width:174.00px;height:24.80px;background:linear-gradient(#f0f0f0,#e2e2e2);"></div>
<div class="t" style="left:1080.00px;top:431.87px;font-size:13.5px;font-weight:400;color:#222;-webkit-text-stroke:0.2px currentColor;">1</div>
<div style="position:absolute;left:1270.00px;top:423.70px;width:140.00px;height:27.90px;background:#fff;border:1px solid #d2d2d2;border-radius:4px;box-sizing:border-box;"></div>
<div style="position:absolute;left:1276.00px;top:429.80px;width:14.80px;height:15.20px;background:#000;box-shadow:inset 0 1px 0 #9a9a9a;"></div>
<div class="t" style="left:1296.30px;top:432.66px;font-size:12.8px;font-weight:700;color:#222;">Black</div>
<div style="position:absolute;left:6.10px;top:460.10px;width:19.50px;height:19.50px;background:#fff;border:1px solid #b8b8b8;border-radius:4.5px;box-sizing:border-box;"></div>
<div class="t" style="left:43.80px;top:464.23px;font-size:13.9px;font-weight:400;color:#222;-webkit-text-stroke:0.45px currentColor;letter-spacing:0.5px;">Model</div>
<div style="position:absolute;left:233.90px;top:459.80px;width:19.80px;height:19.80px;background:#eef6fc;border:1.5px solid #006e72;border-radius:4.5px;box-sizing:border-box;"></div>
<div style="position:absolute;left:359.10px;top:460.00px;width:19.30px;height:19.30px;background:#fff;border:1px solid #c2c2c2;border-radius:4.5px;box-sizing:border-box;"></div>
<div class="t" style="left:443.50px;top:464.36px;font-size:13.75px;font-weight:400;color:#2a2a2a;-webkit-text-stroke:0.45px currentColor;width:182.5px;height:20px;overflow:hidden;">Communication Devices</div>
<div class="t" style="left:668.80px;top:464.61px;font-size:13.45px;font-weight:400;color:#333;-webkit-text-stroke:0.2px currentColor;">-</div>
<div style="position:absolute;left:887.80px;top:457.10px;width:174.00px;height:24.80px;background:linear-gradient(#f0f0f0,#e2e2e2);"></div>
<div class="t" style="left:1080.00px;top:464.37px;font-size:13.5px;font-weight:400;color:#222;-webkit-text-stroke:0.2px currentColor;">1</div>
<div style="position:absolute;left:1270.00px;top:456.20px;width:140.00px;height:27.90px;background:#fff;border:1px solid #d2d2d2;border-radius:4px;box-sizing:border-box;"></div>
<div style="position:absolute;left:1276.00px;top:462.30px;width:14.80px;height:15.20px;background:#000;box-shadow:inset 0 1px 0 #9a9a9a;"></div>
<div class="t" style="left:1296.30px;top:465.16px;font-size:12.8px;font-weight:700;color:#222;">Black</div>
<div style="position:absolute;left:6.10px;top:492.60px;width:19.50px;height:19.50px;background:#fff;border:1px solid #b8b8b8;border-radius:4.5px;box-sizing:border-box;"></div>
<div class="t" style="left:43.80px;top:496.73px;font-size:13.9px;font-weight:400;color:#222;-webkit-text-stroke:0.45px currentColor;letter-spacing:0.5px;">Model</div>
<div style="position:absolute;left:233.90px;top:492.30px;width:19.80px;height:19.80px;background:#eef6fc;border:1.5px solid #006e72;border-radius:4.5px;box-sizing:border-box;"></div>
<div style="position:absolute;left:359.10px;top:492.50px;width:19.30px;height:19.30px;background:#fff;border:1px solid #c2c2c2;border-radius:4.5px;box-sizing:border-box;"></div>
<div class="t" style="left:443.50px;top:496.86px;font-size:13.75px;font-weight:400;color:#2a2a2a;-webkit-text-stroke:0.45px currentColor;width:182.5px;height:20px;overflow:hidden;">Piping Systems</div>
<div class="t" style="left:668.80px;top:497.11px;font-size:13.45px;font-weight:400;color:#333;-webkit-text-stroke:0.2px currentColor;">-</div>
<div style="position:absolute;left:887.80px;top:489.60px;width:174.00px;height:24.80px;background:linear-gradient(#f0f0f0,#e2e2e2);"></div>
<div class="t" style="left:1080.00px;top:496.87px;font-size:13.5px;font-weight:400;color:#222;-webkit-text-stroke:0.2px currentColor;">1</div>
<div style="position:absolute;left:1270.00px;top:488.70px;width:140.00px;height:27.90px;background:#fff;border:1px solid #d2d2d2;border-radius:4px;box-sizing:border-box;"></div>
<div style="position:absolute;left:1276.00px;top:494.80px;width:14.80px;height:15.20px;background:#000;box-shadow:inset 0 1px 0 #9a9a9a;"></div>
<div class="t" style="left:1296.30px;top:497.66px;font-size:12.8px;font-weight:700;color:#222;">Black</div>
<svg style="left:0;top:0" width="1401" height="509" viewBox="37.2 329.4 1401 509"><polyline points="274.4,343.4 279.7,348.5 289,339.09999999999997" fill="none" stroke="#006e72" stroke-width="2.8"/><polyline points="673.3,341.0 676,344.7 678.8,341.0" fill="none" stroke="#b5b5b5" stroke-width="1.1"/><polyline points="898.1,341.0 900.8,344.7 903.5,341.0" fill="none" stroke="#b5b5b5" stroke-width="1.1"/><polyline points="1085.1,341.09999999999997 1088.4,345.0 1091.8,341.09999999999997" fill="none" stroke="#bdbdbd" stroke-width="1.3"/><polyline points="274.4,375.9 279.7,381.0 289,371.59999999999997" fill="none" stroke="#006e72" stroke-width="2.8"/><polyline points="673.3,373.5 676,377.2 678.8,373.5" fill="none" stroke="#b5b5b5" stroke-width="1.1"/><polyline points="898.1,373.5 900.8,377.2 903.5,373.5" fill="none" stroke="#b5b5b5" stroke-width="1.1"/><polyline points="1085.1,373.59999999999997 1088.4,377.5 1091.8,373.59999999999997" fill="none" stroke="#bdbdbd" stroke-width="1.3"/><polyline points="274.4,408.4 279.7,413.5 289,404.09999999999997" fill="none" stroke="#006e72" stroke-width="2.8"/><polyline points="673.3,406.0 676,409.7 678.8,406.0" fill="none" stroke="#b5b5b5" stroke-width="1.1"/><polyline points="898.1,406.0 900.8,409.7 903.5,406.0" fill="none" stroke="#b5b5b5" stroke-width="1.1"/><polyline points="1085.1,406.09999999999997 1088.4,410.0 1091.8,406.09999999999997" fill="none" stroke="#bdbdbd" stroke-width="1.3"/><polyline points="274.4,440.9 279.7,446.0 289,436.59999999999997" fill="none" stroke="#006e72" stroke-width="2.8"/><polyline points="673.3,438.5 676,442.2 678.8,438.5" fill="none" stroke="#b5b5b5" stroke-width="1.1"/><polyline points="898.1,438.5 900.8,442.2 903.5,438.5" fill="none" stroke="#b5b5b5" stroke-width="1.1"/><polyline points="1085.1,438.59999999999997 1088.4,442.5 1091.8,438.59999999999997" fill="none" stroke="#bdbdbd" stroke-width="1.3"/><polyline points="274.4,473.4 279.7,478.5 289,469.09999999999997" fill="none" stroke="#006e72" stroke-width="2.8"/><polyline points="673.3,471.0 676,474.7 678.8,471.0" fill="none" stroke="#b5b5b5" stroke-width="1.1"/><polyline points="898.1,471.0 900.8,474.7 903.5,471.0" fill="none" stroke="#b5b5b5" stroke-width="1.1"/><polyline points="1085.1,471.09999999999997 1088.4,475.0 1091.8,471.09999999999997" fill="none" stroke="#bdbdbd" stroke-width="1.3"/><polyline points="274.4,505.9 279.7,511.0 289,501.59999999999997" fill="none" stroke="#006e72" stroke-width="2.8"/><polyline points="673.3,503.5 676,507.2 678.8,503.5" fill="none" stroke="#b5b5b5" stroke-width="1.1"/><polyline points="898.1,503.5 900.8,507.2 903.5,503.5" fill="none" stroke="#b5b5b5" stroke-width="1.1"/><polyline points="1085.1,503.59999999999997 1088.4,507.5 1091.8,503.59999999999997" fill="none" stroke="#bdbdbd" stroke-width="1.3"/><polyline points="274.4,538.4000000000001 279.7,543.5 289,534.1" fill="none" stroke="#006e72" stroke-width="2.8"/><polyline points="673.3,536.0 676,539.7 678.8,536.0" fill="none" stroke="#b5b5b5" stroke-width="1.1"/><polyline points="898.1,536.0 900.8,539.7 903.5,536.0" fill="none" stroke="#b5b5b5" stroke-width="1.1"/><polyline points="1085.1,536.1 1088.4,540.0 1091.8,536.1" fill="none" stroke="#bdbdbd" stroke-width="1.3"/><polyline points="274.4,570.9000000000001 279.7,576.0 289,566.6" fill="none" stroke="#006e72" stroke-width="2.8"/><polyline points="673.3,568.5 676,572.2 678.8,568.5" fill="none" stroke="#555" stroke-width="1.5"/><polyline points="898.1,568.5 900.8,572.2 903.5,568.5" fill="none" stroke="#555" stroke-width="1.5"/><polyline points="1085.1,568.6 1088.4,572.5 1091.8,568.6" fill="none" stroke="#555" stroke-width="1.7"/><polyline points="274.4,603.4000000000001 279.7,608.5 289,599.1" fill="none" stroke="#006e72" stroke-width="2.8"/><polyline points="673.3,601.0 676,604.7 678.8,601.0" fill="none" stroke="#555" stroke-width="1.5"/><polyline points="898.1,601.0 900.8,604.7 903.5,601.0" fill="none" stroke="#555" stroke-width="1.5"/><polyline points="1085.1,601.1 1088.4,605.0 1091.8,601.1" fill="none" stroke="#555" stroke-width="1.7"/><polyline points="274.4,635.9000000000001 279.7,641.0 289,631.6" fill="none" stroke="#006e72" stroke-width="2.8"/><polyline points="673.3,633.5 676,637.2 678.8,633.5" fill="none" stroke="#555" stroke-width="1.5"/><polyline points="898.1,633.5 900.8,637.2 903.5,633.5" fill="none" stroke="#555" stroke-width="1.5"/><polyline points="1085.1,633.6 1088.4,637.5 1091.8,633.6" fill="none" stroke="#555" stroke-width="1.7"/><polyline points="274.4,668.4000000000001 279.7,673.5 289,664.1" fill="none" stroke="#006e72" stroke-width="2.8"/><polyline points="673.3,666.0 676,669.7 678.8,666.0" fill="none" stroke="#555" stroke-width="1.5"/><polyline points="898.1,666.0 900.8,669.7 903.5,666.0" fill="none" stroke="#555" stroke-width="1.5"/><polyline points="1085.1,666.1 1088.4,670.0 1091.8,666.1" fill="none" stroke="#555" stroke-width="1.7"/><polyline points="274.4,700.9000000000001 279.7,706.0 289,696.6" fill="none" stroke="#006e72" stroke-width="2.8"/><polyline points="673.3,698.5 676,702.2 678.8,698.5" fill="none" stroke="#555" stroke-width="1.5"/><polyline points="898.1,698.5 900.8,702.2 903.5,698.5" fill="none" stroke="#555" stroke-width="1.5"/><polyline points="1085.1,698.6 1088.4,702.5 1091.8,698.6" fill="none" stroke="#555" stroke-width="1.7"/><polyline points="274.4,733.4000000000001 279.7,738.5 289,729.1" fill="none" stroke="#006e72" stroke-width="2.8"/><polyline points="673.3,731.0 676,734.7 678.8,731.0" fill="none" stroke="#555" stroke-width="1.5"/><polyline points="898.1,731.0 900.8,734.7 903.5,731.0" fill="none" stroke="#555" stroke-width="1.5"/><polyline points="1085.1,731.1 1088.4,735.0 1091.8,731.1" fill="none" stroke="#555" stroke-width="1.7"/><polyline points="274.4,765.9000000000001 279.7,771.0 289,761.6" fill="none" stroke="#006e72" stroke-width="2.8"/><polyline points="673.3,763.5 676,767.2 678.8,763.5" fill="none" stroke="#555" stroke-width="1.5"/><polyline points="898.1,763.5 900.8,767.2 903.5,763.5" fill="none" stroke="#555" stroke-width="1.5"/><polyline points="1085.1,763.6 1088.4,767.5 1091.8,763.6" fill="none" stroke="#555" stroke-width="1.7"/><polyline points="274.4,798.4000000000001 279.7,803.5 289,794.1" fill="none" stroke="#006e72" stroke-width="2.8"/><polyline points="673.3,796.0 676,799.7 678.8,796.0" fill="none" stroke="#555" stroke-width="1.5"/><polyline points="898.1,796.0 900.8,799.7 903.5,796.0" fill="none" stroke="#555" stroke-width="1.5"/><polyline points="1085.1,796.1 1088.4,800.0 1091.8,796.1" fill="none" stroke="#555" stroke-width="1.7"/><polyline points="274.4,830.9000000000001 279.7,836.0 289,826.6" fill="none" stroke="#006e72" stroke-width="2.8"/><polyline points="673.3,828.5 676,832.2 678.8,828.5" fill="none" stroke="#555" stroke-width="1.5"/><polyline points="898.1,828.5 900.8,832.2 903.5,828.5" fill="none" stroke="#555" stroke-width="1.5"/><polyline points="1085.1,828.6 1088.4,832.5 1091.8,828.6" fill="none" stroke="#555" stroke-width="1.7"/></svg>
</div>
<div style="position:absolute;left:1438.10px;top:331.70px;width:9.80px;height:505.50px;background:#ebebeb;border-radius:5px;"></div>
<div style="position:absolute;left:1438.10px;top:369.00px;width:9.80px;height:9.50px;background:#8c8c8c;border-radius:5px 5px 0 0;"></div>
<div style="position:absolute;left:36.00px;top:838.10px;width:1402.00px;height:9.80px;background:#ebebeb;border-radius:5px;"></div>
<div style="position:absolute;left:36.00px;top:838.10px;width:1166.70px;height:9.80px;background:#8e8e8e;border-radius:5px;"></div>
<div style="position:absolute;left:1438.10px;top:838.10px;width:9.80px;height:9.80px;background:#fff;"></div>
<svg style="left:1460px;top:915px" width="24" height="22" viewBox="1460 915 24 22"><rect x="1478.1999999999998" y="920.6" width="1.8" height="1.8" fill="#c0c6d2"/><rect x="1474.3999999999999" y="924.4" width="1.8" height="1.8" fill="#c0c6d2"/><rect x="1478.1999999999998" y="924.4" width="1.8" height="1.8" fill="#c0c6d2"/><rect x="1470.6999999999998" y="928.1" width="1.8" height="1.8" fill="#c0c6d2"/><rect x="1474.3999999999999" y="928.1" width="1.8" height="1.8" fill="#c0c6d2"/><rect x="1478.1999999999998" y="928.1" width="1.8" height="1.8" fill="#c0c6d2"/><rect x="1467.0" y="931.8000000000001" width="1.8" height="1.8" fill="#c0c6d2"/><rect x="1470.6999999999998" y="931.8000000000001" width="1.8" height="1.8" fill="#c0c6d2"/><rect x="1474.3999999999999" y="931.8000000000001" width="1.8" height="1.8" fill="#c0c6d2"/><rect x="1478.1999999999998" y="931.8000000000001" width="1.8" height="1.8" fill="#c0c6d2"/></svg>
</body></html>
